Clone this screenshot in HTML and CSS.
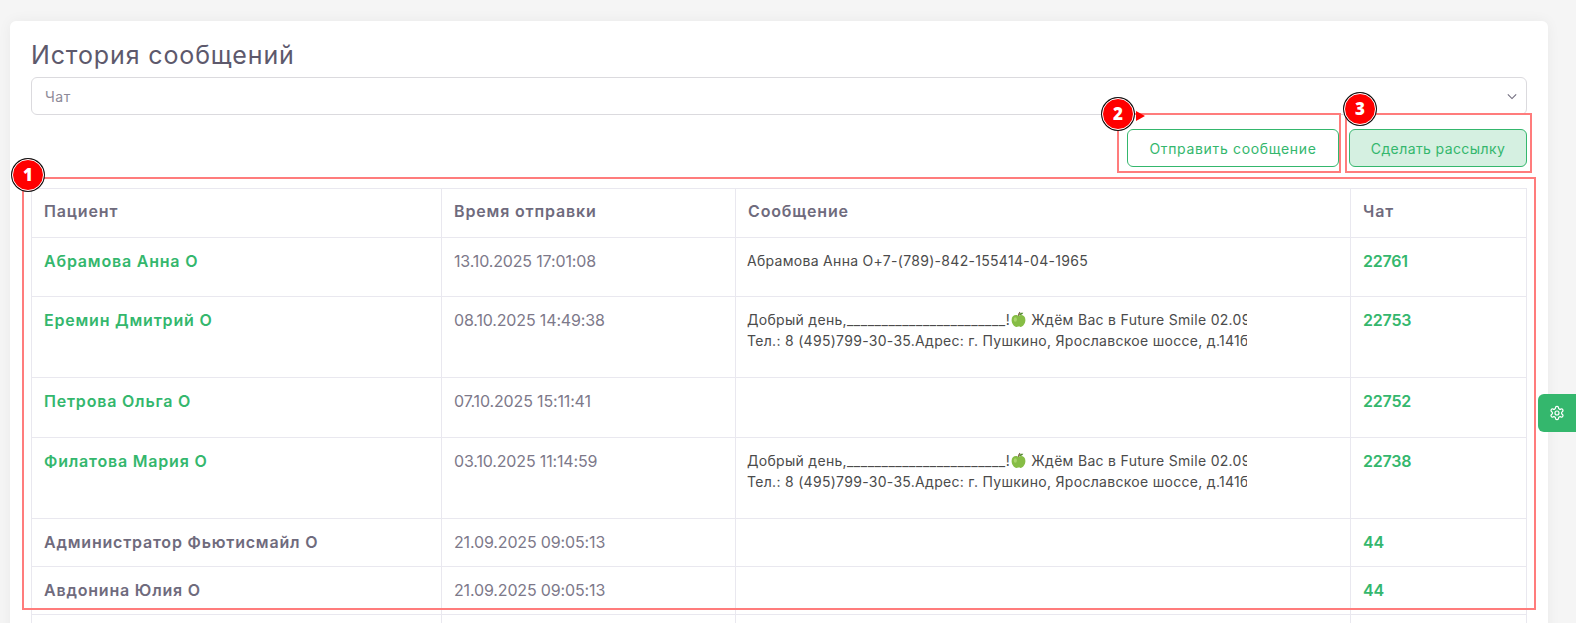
FILE: index.html
```html
<!DOCTYPE html>
<html lang="ru">
<head>
<meta charset="utf-8">
<title>История сообщений</title>
<link rel="stylesheet" href="styles.css">
</head>
<body>
<main class="card">
  <h1 class="title">История сообщений</h1>
  <div class="select"><span>Чат</span>
    <svg class="chevron" viewBox="0 0 12 8" width="10" height="7"><path d="M1 1.500 6 6.500l5-5" fill="none" stroke="#6f6b7d" stroke-width="1.300"/></svg>
  </div>
  <div class="actions">
    <button class="btn">Отправить сообщение</button>
    <button class="btn btn-filled">Сделать рассылку</button>
  </div>
  <table class="messages">
    <colgroup><col class="c1"><col class="c2"><col class="c3"><col class="c4"></colgroup>
    <thead><tr class="r-head"><th>Пациент</th><th>Время отправки</th><th>Сообщение</th><th>Чат</th></tr></thead>
    <tbody>
      <tr class="r-59"><td class="name link">Абрамова Анна О</td><td class="time">13.10.2025 17:01:08</td><td class="msg"><div class="clip">Абрамова Анна О+7-(789)-842-155414-04-1965</div></td><td class="chat">22761</td></tr>
      <tr class="r-81"><td class="name link">Еремин Дмитрий О</td><td class="time">08.10.2025 14:49:38</td><td class="msg"><div class="clip">Добрый день,<span class="blank">_______________________</span>!<svg class="apple" viewBox="0 0 16 16" width="17" height="17"><path d="M8 4.500C5 2.800 1.500 4.500 1.500 8.500c0 3.500 2.500 6.500 4.500 6.500 1 0 1.300-.4 2-.4s1 .4 2 .4c2 0 4.500-3 4.500-6.500 0-4-3.500-5.700-6.500-4z" fill="#86bd45"/><ellipse cx="5" cy="8" rx="1.500" ry="2.200" fill="#a9d46a"/><path d="M8 4.500C8 3 8.500 1.800 9.500 1" stroke="#6d4c2f" stroke-width="1" fill="none"/><path d="M8.500 3.500c.8-1.800 2.500-2.200 4-1.800-.5 1.500-2 2.400-4 1.800z" fill="#558b2f"/></svg> Ждём Вас в Future Smile 02.09.2025 в 10:00<br>Тел.: 8 (495)799-30-35.Адрес: г. Пушкино, Ярославское шоссе, д.141б</div></td><td class="chat">22753</td></tr>
      <tr class="r-60"><td class="name link">Петрова Ольга О</td><td class="time">07.10.2025 15:11:41</td><td class="msg"></td><td class="chat">22752</td></tr>
      <tr class="r-81"><td class="name link">Филатова Мария О</td><td class="time">03.10.2025 11:14:59</td><td class="msg"><div class="clip">Добрый день,<span class="blank">_______________________</span>!<svg class="apple" viewBox="0 0 16 16" width="17" height="17"><path d="M8 4.500C5 2.800 1.500 4.500 1.500 8.500c0 3.500 2.500 6.500 4.500 6.500 1 0 1.300-.4 2-.4s1 .4 2 .4c2 0 4.500-3 4.500-6.500 0-4-3.500-5.700-6.500-4z" fill="#86bd45"/><ellipse cx="5" cy="8" rx="1.500" ry="2.200" fill="#a9d46a"/><path d="M8 4.500C8 3 8.500 1.800 9.500 1" stroke="#6d4c2f" stroke-width="1" fill="none"/><path d="M8.500 3.500c.8-1.800 2.500-2.200 4-1.800-.5 1.500-2 2.400-4 1.800z" fill="#558b2f"/></svg> Ждём Вас в Future Smile 02.09.2025 в 10:00<br>Тел.: 8 (495)799-30-35.Адрес: г. Пушкино, Ярославское шоссе, д.141б</div></td><td class="chat">22738</td></tr>
      <tr class="r-48"><td class="name">Администратор Фьютисмайл О</td><td class="time">21.09.2025 09:05:13</td><td class="msg"></td><td class="chat">44</td></tr>
      <tr class="r-48"><td class="name">Авдонина Юлия О</td><td class="time">21.09.2025 09:05:13</td><td class="msg"></td><td class="chat">44</td></tr>
      <tr class="r-48"><td></td><td></td><td></td><td></td></tr>
    </tbody>
  </table>
</main>

<div class="settings-tab">
  <svg viewBox="0 0 24 24" width="16" height="16" fill="none" stroke="#fff" stroke-width="1.800" stroke-linecap="round" stroke-linejoin="round"><path d="M12.220 2h-.44a2 2 0 0 0-2 2v.18a2 2 0 0 1-1 1.730l-.43.250a2 2 0 0 1-2 0l-.15-.08a2 2 0 0 0-2.730.730l-.22.380a2 2 0 0 0 .730 2.730l.15.100a2 2 0 0 1 1 1.720v.510a2 2 0 0 1-1 1.740l-.15.090a2 2 0 0 0-.730 2.730l.22.380a2 2 0 0 0 2.730.730l.15-.08a2 2 0 0 1 2 0l.43.250a2 2 0 0 1 1 1.730V20a2 2 0 0 0 2 2h.44a2 2 0 0 0 2-2v-.18a2 2 0 0 1 1-1.730l.43-.250a2 2 0 0 1 2 0l.15.080a2 2 0 0 0 2.730-.730l.22-.390a2 2 0 0 0-.730-2.730l-.15-.080a2 2 0 0 1-1-1.740v-.500a2 2 0 0 1 1-1.740l.15-.090a2 2 0 0 0 .730-2.730l-.22-.380a2 2 0 0 0-2.730-.730l-.15.080a2 2 0 0 1-2 0l-.43-.250a2 2 0 0 1-1-1.730V4a2 2 0 0 0-2-2z"/><circle cx="12" cy="12" r="3"/></svg>
</div>

<div class="mark mark-1"></div>
<div class="mark mark-2"></div>
<div class="mark mark-3"></div>
<div class="arrow"></div>
<div class="badge badge-1">1</div>
<div class="badge badge-2">2</div>
<div class="badge badge-3">3</div>
</body>
</html>
```
FILE: styles.css
```css
* { box-sizing: border-box; }
html, body { height: 100%; }
body {
  margin: 0;
  padding: 21px 28px 0 10px;
  background: #f5f5f5;
  font-family: Inter, "Noto Sans", sans-serif;
  color: #6f6b7d;
  overflow: hidden;
  position: relative;
}
.card {
  background: #fff;
  border-radius: 6px;
  padding: 19px 21px 0;
  box-shadow: 0 0 14px rgba(0, 0, 0, .05);
  min-height: 640px;
}
.title {
  margin: 0;
  font-size: 25px;
  line-height: 30px;
  font-weight: 400;
  color: #5d596c;
  letter-spacing: .87px;
}
.select {
  margin-top: 7px;
  height: 38px;
  border: 1px solid #dbdade;
  border-radius: 6px;
  display: flex;
  align-items: center;
  justify-content: space-between;
  padding: 0 9px 0 13px;
  font-size: 14px;
  letter-spacing: .5px;
  color: #8d8a98;
}
.actions {
  display: flex;
  justify-content: flex-end;
  gap: 10px;
  margin-top: 14px;
}
.btn {
  height: 38px;
  border: 1px solid #34b76d;
  border-radius: 6px;
  background: #fff;
  color: #34b76d;
  font-family: inherit;
  font-size: 14px;
  letter-spacing: .67px;
  width: 212px;
  padding: 0;
}
.btn-filled { background: #d5f0e1; width: 178px; letter-spacing: .4px; }
.messages {
  margin-top: 21px;
  width: 1495px;
  table-layout: fixed;
  border-collapse: collapse;
  font-size: 16px;
}
.c1 { width: 410px; }
.c2 { width: 294px; }
.c3 { width: 615px; }
.c4 { width: 176px; }
th, td {
  border: 1px solid #e9e8ef;
  padding: 11px 12px 12px;
  text-align: left;
  vertical-align: top;
  line-height: 24px;
}
th {
  font-weight: 600;
  color: #6f6b7d;
  vertical-align: middle;
  letter-spacing: .85px;
  padding: 10px 12px 14px;
}
.r-head { height: 49px; }
.r-59 { height: 59px; }
.r-60 { height: 60px; }
.r-81 { height: 81px; }
.r-48 { height: 48px; }
.name { font-weight: 600; color: #6f6b7d; letter-spacing: .8px; }
.link { color: #34b76d; }
.time { color: #7d798a; letter-spacing: -.15px; }
.chat { font-weight: 600; color: #34b76d; letter-spacing: -.2px; }
.msg { font-size: 14px; color: #4b4b4b; padding: 12px 0 0 11px; }
.clip {
  width: 500px;
  overflow: hidden;
  white-space: nowrap;
  line-height: 21px;
  letter-spacing: .3px;
}
.blank { letter-spacing: .52px; }
.apple { vertical-align: -3px; }
.settings-tab {
  position: absolute;
  left: 1538px;
  top: 394px;
  width: 38px;
  height: 38px;
  background: #34b76d;
  border-radius: 6px 0 0 6px;
  display: flex;
  align-items: center;
  justify-content: center;
  padding-right: 1px;
}
.mark { position: absolute; border: 2px solid #ff7c7c; }
.mark-1 { left: 22px; top: 177px; width: 1514px; height: 433px; }
.mark-2 { left: 1117px; top: 113px; width: 224px; height: 60px; }
.mark-3 { left: 1345px; top: 113px; width: 187px; height: 60px; }
.arrow {
  position: absolute;
  left: 1136px;
  top: 111px;
  border-left: 9px solid #f00;
  border-top: 5px solid transparent;
  border-bottom: 5px solid transparent;
}
.badge {
  position: absolute;
  width: 32px;
  height: 32px;
  border-radius: 50%;
  background: #f00;
  border: 1px solid #fff;
  box-shadow: 0 0 0 1px #111;
  color: #fff;
  font: 800 17px/30px "Open Sans", sans-serif;
  text-align: center;
}
.badge-1 { left: 12px; top: 159px; }
.badge-2 { left: 1102px; top: 98px; }
.badge-3 { left: 1344px; top: 93px; }
```
